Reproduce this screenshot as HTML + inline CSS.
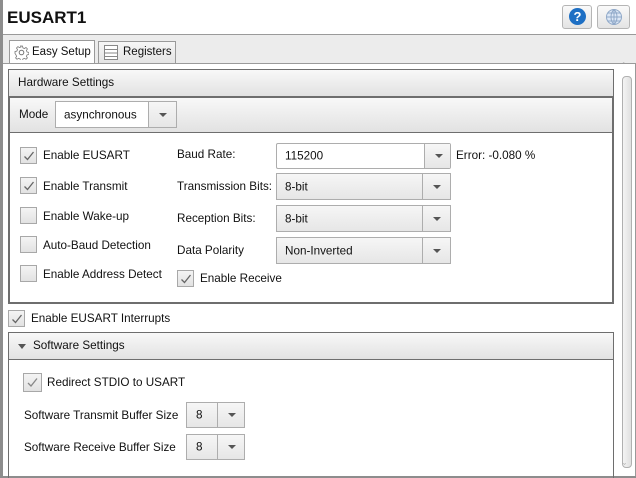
<!DOCTYPE html>
<html><head><meta charset="utf-8"><style>
*{box-sizing:border-box;margin:0;padding:0}
body{width:636px;height:478px;background:#fff;font-family:"Liberation Sans",sans-serif;font-size:11.7px;color:#111;position:relative;overflow:hidden}
.a{position:absolute}
.cb{position:absolute;width:17px;height:17px;border:1px solid #a8a8a8;background:linear-gradient(#f4f4f4,#e2e2e2)}
.cb svg{position:absolute;left:2px;top:2px}
.t{position:absolute;white-space:nowrap}
.combo{position:absolute;border:1px solid #adadad;background:linear-gradient(#f6f6f6,#e6e6e6)}
.combo .v{position:absolute;left:8px;top:50%;transform:translateY(-50%)}
.combo .b{position:absolute;right:0;top:0;bottom:0;width:28px;border-left:1px solid #adadad}
.combo .b:after{content:"";position:absolute;left:10px;top:50%;margin-top:-2px;border-left:4px solid transparent;border-right:4px solid transparent;border-top:4px solid #555}
.hdr{position:absolute;background:linear-gradient(#f8f8f8,#e2e2e2);border:1px solid #6e6e6e}
</style></head><body>
<div class="a" style="left:0;top:0;width:3px;height:478px;background:#8d8d8d"></div>
<div class="t" style="left:7px;top:8px;font-size:17px;font-weight:bold">EUSART1</div>
<div class="a" style="left:562px;top:5px;width:30px;height:24px;border:1px solid #b5b5b5;border-radius:3px;background:linear-gradient(#fafafa,#e4e4e4)"><div class="a" style="left:6px;top:2px;width:17px;height:17px;border-radius:50%;background:#1d6fc4;color:#fff;font-weight:bold;font-size:13px;text-align:center;line-height:17px">?</div></div>
<div class="a" style="left:597px;top:5px;width:33px;height:24px;border:1px solid #b5b5b5;border-radius:3px;background:linear-gradient(#fafafa,#e4e4e4)"><svg class="a" style="left:7px;top:2px" width="18" height="18" viewBox="0 0 18 18"><circle cx="9" cy="9" r="7.5" fill="#dde8f6" stroke="#8fa8c8"/><path d="M9 1.5V16.5M1.5 9H16.5M3 5H15M3 13H15M9 1.5C5 5 5 13 9 16.5M9 1.5C13 5 13 13 9 16.5" stroke="#8fa8c8" fill="none"/></svg></div>
<div class="a" style="left:3px;top:34px;width:633px;height:444px;background:#ececec;border-top:1px solid #9a9a9a"></div>
<div class="a" style="left:9px;top:40px;width:86px;height:24px;background:#fff;border:1px solid #9a9a9a;border-bottom:none"></div>
<svg class="a" style="left:14px;top:45px" width="15" height="15" viewBox="0 0 15 15"><circle cx="7.5" cy="7.5" r="2.3" fill="none" stroke="#777"/><path d="M6.5 1h2l.4 1.8 1.5.7 1.6-1 1.4 1.4-1 1.6.7 1.5 1.8.4v2l-1.8.4-.7 1.5 1 1.6-1.4 1.4-1.6-1-1.5.7-.4 1.8h-2l-.4-1.8-1.5-.7-1.6 1-1.4-1.4 1-1.6-.7-1.5L1 8.5v-2l1.8-.4.7-1.5-1-1.6L3.9 1.6l1.6 1 1.5-.7z" fill="none" stroke="#777" stroke-width=".8"/></svg>
<div class="t" style="left:32px;top:46px;font-size:11.5px">Easy Setup</div>
<div class="a" style="left:98px;top:41px;width:78px;height:22px;background:linear-gradient(#f6f6f6,#e4e4e4);border:1px solid #9a9a9a;border-bottom:none"></div>
<svg class="a" style="left:104px;top:45px" width="14" height="15" viewBox="0 0 14 15"><rect x=".5" y=".5" width="13" height="14" fill="#fff" stroke="#888"/><path d="M1 4.5H13M1 8H13M1 11.5H13" stroke="#888"/></svg>
<div class="t" style="left:123px;top:46px;font-size:11.5px">Registers</div>
<div class="a" style="left:3px;top:63px;width:633px;height:415px;background:#fff;border:1px solid #9a9a9a;border-left:none"></div>
<div class="a" style="left:3px;top:476px;width:633px;height:2px;background:#8d8d8d"></div>
<div class="t" style="left:622px;top:62px;color:#999;font-size:10px">&#710;</div>
<div class="a" style="left:622px;top:76px;width:10px;height:392px;border:1px solid #b0b0b0;border-radius:4px;background:linear-gradient(90deg,#f4f4f4,#e0e0e0)"></div>
<div class="t" style="left:623px;top:462px;color:#999;font-size:9px">&#711;</div>
<div class="a" style="left:8px;top:69px;width:606px;height:235px;border:2px solid #6e6e6e;border-top:1px solid #6e6e6e"></div>
<div class="hdr" style="left:8px;top:69px;width:606px;height:28px"></div>
<div class="t" style="left:18px;top:76px">Hardware Settings</div>
<div class="hdr" style="left:8px;top:96px;width:606px;height:37px;border-width:2px 2px 1px 2px"></div>
<div class="t" style="left:19px;top:108px">Mode</div>
<div class="combo" style="left:55px;top:101px;width:122px;height:27px;background:#fff"><span class="v">asynchronous</span><div class="b" style="background:linear-gradient(#f6f6f6,#e6e6e6)"></div></div>

<div class="cb" style="left:20px;top:147px"><svg width="12" height="12"><path d="M1.5 6.5L4.5 9.5L10.5 2" stroke="#666" stroke-width="1.3" fill="none"/></svg></div>
<div class="t" style="left:43px;top:149px">Enable EUSART</div>
<div class="cb" style="left:20px;top:177px"><svg width="12" height="12"><path d="M1.5 6.5L4.5 9.5L10.5 2" stroke="#666" stroke-width="1.3" fill="none"/></svg></div>
<div class="t" style="left:43px;top:180px">Enable Transmit</div>
<div class="cb" style="left:20px;top:207px"></div>
<div class="t" style="left:43px;top:210px">Enable Wake-up</div>
<div class="cb" style="left:20px;top:236px"></div>
<div class="t" style="left:43px;top:239px">Auto-Baud Detection</div>
<div class="cb" style="left:20px;top:265px"></div>
<div class="t" style="left:43px;top:268px">Enable Address Detect</div>

<div class="t" style="left:177px;top:148px">Baud Rate:</div>
<div class="combo" style="left:276px;top:143px;width:175px;height:26px;background:#fff;border-radius:2px"><span class="v">115200</span><div class="b" style="width:26px;background:linear-gradient(#f6f6f6,#e6e6e6)"></div></div>
<div class="t" style="left:456px;top:149px">Error: -0.080 %</div>
<div class="t" style="left:177px;top:180px">Transmission Bits:</div>
<div class="combo" style="left:276px;top:173px;width:175px;height:27px"><span class="v">8-bit</span><div class="b"></div></div>
<div class="t" style="left:177px;top:212px">Reception Bits:</div>
<div class="combo" style="left:276px;top:205px;width:175px;height:27px"><span class="v">8-bit</span><div class="b"></div></div>
<div class="t" style="left:177px;top:244px">Data Polarity</div>
<div class="combo" style="left:276px;top:237px;width:175px;height:27px"><span class="v">Non-Inverted</span><div class="b"></div></div>
<div class="cb" style="left:177px;top:270px"><svg width="12" height="12"><path d="M1.5 6.5L4.5 9.5L10.5 2" stroke="#666" stroke-width="1.3" fill="none"/></svg></div>
<div class="t" style="left:200px;top:272px">Enable Receive</div>

<div class="cb" style="left:8px;top:310px"><svg width="12" height="12"><path d="M1.5 6.5L4.5 9.5L10.5 2" stroke="#666" stroke-width="1.3" fill="none"/></svg></div>
<div class="t" style="left:31px;top:312px">Enable EUSART Interrupts</div>

<div class="a" style="left:8px;top:332px;width:606px;height:146px;border-left:1px solid #6e6e6e;border-right:1px solid #6e6e6e"></div>
<div class="hdr" style="left:8px;top:332px;width:606px;height:28px"></div>
<div class="a" style="left:18px;top:344px;border-left:4px solid transparent;border-right:4px solid transparent;border-top:5px solid #555"></div>
<div class="t" style="left:33px;top:339px">Software Settings</div>
<div class="cb" style="left:23px;top:373px;width:19px;height:19px"><svg width="13" height="13"><path d="M2 7L5 10L11 2.5" stroke="#888" stroke-width="1.3" fill="none"/></svg></div>
<div class="t" style="left:47px;top:376px">Redirect STDIO to USART</div>
<div class="t" style="left:24px;top:409px">Software Transmit Buffer Size</div>
<div class="combo" style="left:186px;top:402px;width:59px;height:26px"><span class="v" style="left:9px">8</span><div class="b" style="width:27px"></div></div>
<div class="t" style="left:24px;top:441px">Software Receive Buffer Size</div>
<div class="combo" style="left:186px;top:434px;width:59px;height:26px"><span class="v" style="left:9px">8</span><div class="b" style="width:27px"></div></div>
</body></html>
